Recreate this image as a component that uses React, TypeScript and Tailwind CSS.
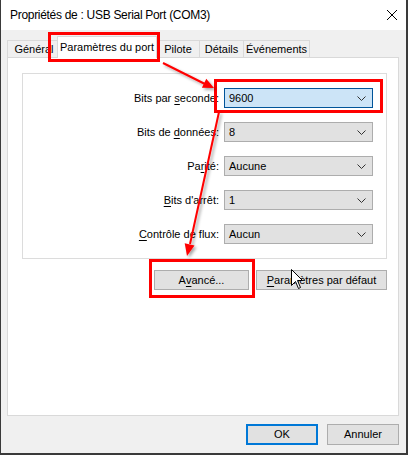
import React from "react";

const FONT = { fontFamily: '"Liberation Sans", Arial, sans-serif' };

function U({ children }: { children: React.ReactNode }) {
  return <span className="underline decoration-1 underline-offset-[2px]">{children}</span>;
}

function Combo({ value, active }: { value: string; active?: boolean }) {
  return (
    <div
      className={`w-[149px] h-[20px] flex items-center pl-[4px] pr-[6px] border ${
        active ? "bg-[#cce4f7] border-[#005499]" : "bg-[#e1e1e1] border-[#adadad]"
      }`}
    >
      <span className="flex-1 text-[11px] leading-none text-black">{value}</span>
      <svg width="9" height="5" viewBox="0 0 9 5">
        <path d="M0.5 0.5 L4.5 4.5 L8.5 0.5" fill="none" stroke="#333" strokeWidth="1" />
      </svg>
    </div>
  );
}

function Row({ label, value, active }: { label: React.ReactNode; value: string; active?: boolean }) {
  return (
    <div className="flex items-center">
      <div className="w-[201px] pr-[5px] text-right text-[11px] leading-none text-black">{label}</div>
      <Combo value={value} active={active} />
    </div>
  );
}

function Btn({ children, className = "" }: { children: React.ReactNode; className?: string }) {
  return (
    <div
      className={`h-[20px] flex items-center justify-center bg-[#e1e1e1] text-[11px] leading-none text-black ${className}`}
    >
      {children}
    </div>
  );
}

export default function App() {
  return (
    <div className="relative w-[408px] h-[455px] overflow-hidden" style={FONT}>
      <div className="w-[408px] h-[455px] bg-[#f0f0f0] border-l border-r-2 border-b-2 border-[#3a3a3a] flex flex-col">
        {/* Title bar */}
        <div className="h-[30px] bg-white flex items-center justify-between pl-[9px] pr-[9px] shrink-0">
          <span className="text-[12px] tracking-[-0.3px] text-black">Propriétés de : USB Serial Port (COM3)</span>
          <svg width="10" height="10" viewBox="0 0 10 10">
            <path d="M0 0 L10 10 M10 0 L0 10" stroke="#000" strokeWidth="1" />
          </svg>
        </div>

        {/* Tabs */}
        <div className="pt-[6px] pl-[6px] h-[27px] flex items-end shrink-0 text-[11px] text-black">
          <div className="w-[50px] h-[17px] border-l border-t border-[#d9d9d9] flex items-center justify-center pl-[3px]">
            Général
          </div>
          <div className="relative z-10 -mb-px w-[100px] h-[22px] bg-white border-l border-t border-r border-[#d9d9d9] flex items-center justify-center pb-[1px]">
            Paramètres du port
          </div>
          <div className="w-[43px] h-[17px] border-t border-r border-[#d9d9d9] flex items-center justify-center">
            Pilote
          </div>
          <div className="w-[44px] h-[17px] border-t border-r border-[#d9d9d9] flex items-center justify-center">
            Détails
          </div>
          <div className="w-[66px] h-[17px] border-t border-r border-[#d9d9d9] flex items-center justify-center">
            Événements
          </div>
        </div>

        {/* Panel */}
        <div className="ml-[6px] w-[392px] h-[359px] bg-white border border-[#d9d9d9] pl-[14px] pt-[15px] shrink-0">
          <div className="w-[365px] border border-[#dcdcdc] flex flex-col gap-[14px] py-[14px]">
            <Row label={<>Bits par <U>s</U>econde:</>} value="9600" active />
            <Row label={<>Bits de <U>d</U>onnées:</>} value="8" />
            <Row label={<>Pa<U>r</U>ité:</>} value="Aucune" />
            <Row label={<><U>B</U>its d'arrêt:</>} value="1" />
            <Row label={<><U>C</U>ontrôle de flux:</>} value="Aucun" />
          </div>
          <div className="w-[365px] mt-[11px] flex justify-end gap-[7px]">
            <Btn className="w-[95px] border border-[#adadad]">
              A<U>v</U>ancé...
            </Btn>
            <Btn className="w-[131px] border border-[#adadad]">
              <U>P</U>aramètres par défaut
            </Btn>
          </div>
        </div>

        {/* Bottom buttons */}
        <div className="ml-[6px] w-[392px] mt-[8px] flex justify-end gap-[9px]">
          <Btn className="w-[72px] h-[21px] border-2 border-[#0078d7]">OK</Btn>
          <Btn className="w-[72px] h-[21px] border border-[#adadad]">Annuler</Btn>
        </div>
      </div>

      {/* Annotations */}
      <div className="absolute left-[48px] top-[32px] w-[112px] h-[30px] border-[3px] border-[#ff0000] pointer-events-none" />
      <div className="absolute left-[214px] top-[79px] w-[169px] h-[34px] border-[3px] border-[#ff0000] pointer-events-none" />
      <div className="absolute left-[149px] top-[259px] w-[106px] h-[39px] border-[3px] border-[#ff0000] pointer-events-none" />

      <svg className="absolute left-0 top-0 pointer-events-none" width="408" height="455" viewBox="0 0 408 455">
        <defs>
          <filter id="sh" x="-20%" y="-20%" width="140%" height="140%">
            <feDropShadow dx="2" dy="2" stdDeviation="1.5" floodColor="#000" floodOpacity="0.35" />
          </filter>
        </defs>
        <g filter="url(#sh)">
          <line x1="163" y1="63" x2="205" y2="84" stroke="#ff0000" strokeWidth="2" />
          <polygon points="214,88 201.9,87.7 206.3,78.7" fill="#ff0000" />
          <line x1="219" y1="112" x2="190" y2="244" stroke="#ff0000" strokeWidth="2" />
          <polygon points="187,256 194.5,245.4 184.7,243.2" fill="#ff0000" />
        </g>
        {/* cursor */}
        <path
          d="M291.5 269.5 L291.5 285.5 L295.5 281.5 L298.5 288.5 L300.5 287.5 L297.5 280.5 L302.5 280.5 Z"
          fill="#fff"
          stroke="#000"
          strokeWidth="1"
          strokeLinejoin="miter"
        />
      </svg>
    </div>
  );
}
